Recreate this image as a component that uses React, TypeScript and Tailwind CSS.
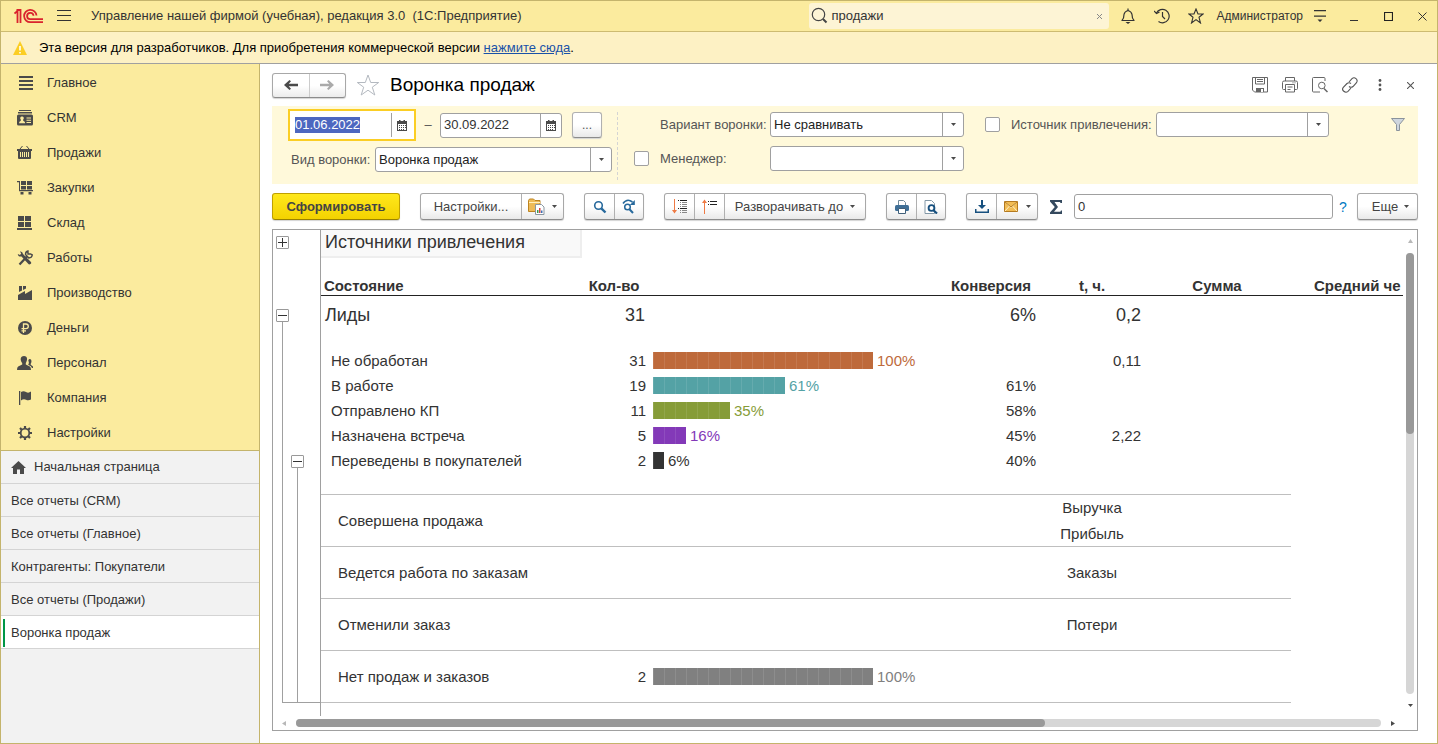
import React, { useEffect, useRef } from 'react';

type IconProps = { className?: string };

const Logo = () => (
  <svg width="30" height="16" viewBox="0 0 30 16" fill="none" stroke="#d9232e" strokeWidth="1.8">
    <path d="M0.5 5.5L3.5 3V15" />
    <path d="M2.5 2H6.5V15" />
    <path d="M22.5 7.5A6.2 6.2 0 1 0 16.5 14.2H29" />
    <path d="M19.5 7.8A3.2 3.2 0 1 0 16.5 11.2H29" />
  </svg>
);

const Caret: React.FC<IconProps> = ({ className }) => (
  <svg className={className} width="5" height="3" viewBox="0 0 5 3">
    <path d="M0 0H5L2.5 3Z" fill="#4a4a4a" />
  </svg>
);

const CalendarIcon = () => (
  <svg width="10" height="11" viewBox="0 0 10 11">
    <path d="M2 0h1.500v1h3V0H8v1h2v10H0V1h2z" fill="#4a4a4a" />
    <path d="M1 4h8v6H1z" fill="#fff" />
    <path d="M2 5h1v1H2zM4 5h1v1H4zM6 5h1v1H6zM8 5h1v1H8zM2 7h1v1H2zM4 7h1v1H4zM6 7h1v1H6zM8 7h1v1H8zM2 9h1v1H2zM4 9h1v1H4zM6 9h1v1H6z" fill="#4a4a4a" />
  </svg>
);

const menu = [
  {
    title: 'Главное',
    icon: <path d="M2 1h14v2H2zM2 5h14v2H2zM2 9h14v2H2zM2 13h14v2H2z" />,
  },
  {
    title: 'CRM',
    icon: (
      <>
        <path d="M2 0h12v1H2zM1 2h14v1.500H1zM1.500 4.500h13q1.500 0 1.500 1.500v8q0 1.500-1.500 1.500h-13Q0 15.500 0 14V6Q0 4.500 1.500 4.500z" />
        <path d="M5 6.500a1.700 1.700 0 0 1 1.200 3v1.200q2 .6 2 2.600H2q0-2 1.800-2.600V9.500A1.700 1.700 0 0 1 5 6.500zM9.500 7.500H14v1H9.500zM9.500 9.800H14v1H9.500zM9.500 12H14v1H9.500z" fill="#fbeb9e" />
      </>
    ),
  },
  {
    title: 'Продажи',
    icon: (
      <>
        <path d="M0 4h15v2H0zM1 6h13v7q0 1-1 1H2q-1 0-1-1z" />
        <path d="M3 4l2.500-3M12 4L9.500 1" stroke="#4a4a4a" fill="none" />
        <path d="M3 7h1v5H3zM5 7h1v5H5zM7 7h1v5H7zM9 7h1v5H9zM11 7h1v5h-1z" fill="#fbeb9e" />
      </>
    ),
  },
  {
    title: 'Закупки',
    icon: (
      <path d="M0 1h3v9h13v1.200H2V2.200H0zM4 1h5v4H4zM10 1h5v4h-5zM4 6h5v3.500H4zM10 6h5v3.500h-5zM3.500 12h3v2.500h-3zM11.500 12h3v2.500h-3z" />
    ),
  },
  {
    title: 'Склад',
    icon: <path d="M1 1h6v5H1zM8 1h6v5H8zM1 7h6v5H1zM8 7h6v5H8zM0 13h15v2H0z" />,
  },
  {
    title: 'Работы',
    icon: (
      <>
        <path d="M3 1.500Q5.500 1 6 4l7.500 7.500q1.500 1.500 0 2.500t-2.300-.3L4.500 6.500Q1 7 .8 4L3 5 4.200 3.500z" />
        <path d="M2.500 14.500L10 6.500" stroke="#4a4a4a" strokeWidth="2.200" fill="none" />
        <path d="M8.500 4.500Q8.500 1.500 11 1v3h2.500l1.800 1q-.5 3-3.500 3z" fill="none" stroke="#4a4a4a" strokeWidth="1.400" />
      </>
    ),
  },
  {
    title: 'Производство',
    icon: <path d="M1 15V10L8 6v3l7-4v10zM2 1h3v4.500L2 7zM6 1h3v2.500L6 5z" />,
  },
  {
    title: 'Деньги',
    icon: (
      <>
        <circle cx="8" cy="8" r="7" />
        <path d="M6.500 13V4H9a2.300 2.300 0 0 1 0 4.600H4.500M4.500 10.800H9" fill="none" stroke="#fbeb9e" strokeWidth="1.300" />
      </>
    ),
  },
  {
    title: 'Персонал',
    icon: (
      <path d="M7 1c4 0 3.500 4.500 1.800 7v1.500l4 2Q14 12 14 15H0q0-3 1.200-3.500l4-2V8C3 5.500 3 1 7 1zM12.500 4c2.500-.2 2.300 3.500 1.200 4.800v1L16 11.500V13h-1q-.5-1.600-3.800-3.200Q12.500 8 11.300 5z" />
    ),
  },
  {
    title: 'Компания',
    icon: <path d="M2 1h1.300v14H2zM4 2q2.500-1.500 5 0t5-.5v8q-2.500 1.500-5 .3T4 10.500z" />,
  },
  {
    title: 'Настройки',
    icon: (
      <>
        <circle cx="8" cy="8" r="4.300" fill="none" stroke="#4a4a4a" strokeWidth="1.800" />
        <path
          d="M8 1v2.500M8 12.500V15M1 8h2.500M12.500 8H15M3 3l1.700 1.700M11.300 11.300L13 13M13 3l-1.700 1.700M4.700 11.300L3 13"
          stroke="#4a4a4a"
          strokeWidth="2.200"
          fill="none"
        />
      </>
    ),
  },
];

const tabs = [
  'Все отчеты (CRM)',
  'Все отчеты (Главное)',
  'Контрагенты: Покупатели',
  'Все отчеты (Продажи)',
  'Воронка продаж',
];

const stages = [
  { name: 'Не обработан', count: 31, blocks: 20, percent: '100%', bar: 'bg-[#be6a3b]', text: 'text-[#be6a3b]', conversion: '', hours: '0,11' },
  { name: 'В работе', count: 19, blocks: 12, percent: '61%', bar: 'bg-[#54a2a5]', text: 'text-[#54a2a5]', conversion: '61%', hours: '' },
  { name: 'Отправлено КП', count: 11, blocks: 7, percent: '35%', bar: 'bg-[#869c38]', text: 'text-[#869c38]', conversion: '58%', hours: '' },
  { name: 'Назначена встреча', count: 5, blocks: 3, percent: '16%', bar: 'bg-[#8339b8]', text: 'text-[#8339b8]', conversion: '45%', hours: '2,22' },
  { name: 'Переведены в покупателей', count: 2, blocks: 1, percent: '6%', bar: 'bg-[#333333]', text: 'text-[#333333]', conversion: '40%', hours: '' },
];

const outcomes = [
  { name: 'Совершена продажа', labels: ['Выручка', 'Прибыль'], last: false },
  { name: 'Ведется работа по заказам', labels: ['Заказы'], last: false },
  { name: 'Отменили заказ', labels: ['Потери'], last: false },
  { name: 'Нет продаж и заказов', labels: [], last: true },
];

const Bar: React.FC<{ blocks: number; percent: string; bar: string; text: string }> = ({ blocks, percent, bar, text }) => (
  <div className={`flex items-center gap-1 pl-1.5 ${text}`}>
    <div className="flex">
      {Array.from({ length: blocks }, (_, i) => (
        <div key={i} className={`h-[17px] w-[11px] border-l border-white/10 ${bar}`} />
      ))}
    </div>
    {percent}
  </div>
);

const ToolButton: React.FC<{ label: string; className?: string; children: React.ReactNode }> = ({ label, className = 'w-[30px]', children }) => (
  <button aria-label={label} className={`flex items-center justify-center ${className}`}>
    {children}
  </button>
);

const ButtonGroup: React.FC<{ children: React.ReactNode }> = ({ children }) => (
  <div className="flex h-[27px] shrink-0 divide-x divide-[#b0b0b0] rounded-[3px] border border-[#a8a8a8] border-b-[#8c8c8c] bg-linear-to-b from-white from-50% to-[#e9e9e9] shadow-[0_1px_1px_#d4d4d4]">
    {children}
  </div>
);

const SelectBox: React.FC<{ id: string; value: string; className: string }> = ({ id, value, className }) => (
  <div className={`relative h-[25px] shrink-0 rounded-[3px] border border-[#a0a0a0] bg-white ${className}`}>
    <select id={id} className="h-full w-full appearance-none pr-6 pl-[3px] text-[#222222] outline-none">
      <option>{value}</option>
    </select>
    <span className="pointer-events-none absolute inset-y-0 right-0 flex w-[21px] items-center justify-center border-l border-[#a0a0a0]">
      <Caret />
    </span>
  </div>
);

const Toggle: React.FC<{ open?: boolean }> = ({ open }) => (
  <button
    aria-label={open ? 'Свернуть' : 'Развернуть'}
    className="flex size-[13px] shrink-0 items-center justify-center rounded-[1px] border border-[#999999] bg-white"
  >
    <svg width="9" height="9" viewBox="0 0 9 9" stroke="#333" fill="none">
      <path d={open ? 'M0 4.500H9' : 'M0 4.500H9M4.500 0V9'} />
    </svg>
  </button>
);

const TitleBar = () => (
  <header className="flex h-[31px] items-center border-b border-[#cdbb71] bg-[#fbeb9e] pr-[5px] pl-[13px]">
    <Logo />
    <button aria-label="Меню" className="ml-[13px]">
      <svg width="14" height="12" viewBox="0 0 14 12" stroke="#333" fill="none">
        <path d="M0 .5H14M0 5.500H14M0 10.500H14" strokeWidth="1.200" />
      </svg>
    </button>
    <h1 className="ml-5 whitespace-pre text-[#333333]">Управление нашей фирмой (учебная), редакция 3.0  (1С:Предприятие)</h1>
    <div className="ml-auto flex h-[26px] w-[300px] items-center rounded-[3px] bg-[#fdf4d5] px-0.5">
      <svg width="18" height="18" viewBox="0 0 18 18" fill="none" stroke="#444">
        <circle cx="7.500" cy="7.500" r="6.200" strokeWidth="1.200" />
        <path d="M12 12l3.500 3.500" strokeWidth="2" />
      </svg>
      <input aria-label="Поиск" defaultValue="продажи" className="min-w-0 flex-1 pl-0.5 text-[#333333] outline-none" />
      <button aria-label="Очистить" className="flex size-4 items-center justify-center">
        <svg width="5" height="5" viewBox="0 0 5 5" stroke="#888">
          <path d="M0 0L5 5M5 0L0 5" />
        </svg>
      </button>
    </div>
    <div className="ml-[9px] flex items-center gap-3.5">
      <button aria-label="Уведомления" className="flex w-5 justify-center">
        <svg width="16" height="16" viewBox="0 0 16 16" fill="none" stroke="#333" strokeWidth="1.200">
          <path d="M2 12.500C4 10.500 4 9 4 6.500Q4.500 3.500 8 2.500 11.500 3.500 12 6.500C12 9 12 10.500 14 12.500Z" strokeLinejoin="round" />
          <path d="M8 0.500V2.500" />
          <path d="M5.500 14h5L8 16z" fill="#333" stroke="none" />
        </svg>
      </button>
      <button aria-label="История" className="flex w-5 justify-center">
        <svg width="16" height="16" viewBox="0 0 16 16" fill="none" stroke="#333" strokeWidth="1.200">
          <path d="M2.500 5A6.700 6.700 0 1 1 4.500 13.500" />
          <path d="M0 3l2.500 2.500L5.500 4M8.500 4v4.500L11 11" />
        </svg>
      </button>
      <button aria-label="Избранное" className="flex w-5 justify-center">
        <svg width="16" height="16" viewBox="0 0 16 16" fill="none" stroke="#333" strokeWidth="1.100">
          <path d="M8 1l2 5h5l-4 3.300L12.500 15 8 11.600 3.500 15 5 9.300 1 6h5z" />
        </svg>
      </button>
    </div>
    <span className="ml-2.5 text-xs text-[#333333]">Администратор</span>
    <div className="ml-[7px] flex items-center gap-3.5">
      <button aria-label="Сервис" className="flex w-5 justify-center">
        <svg width="14" height="12" viewBox="0 0 14 12">
          <path d="M1 0h12v1.300H1zM1 5.500h12v1.300H1zM4.500 9.500h5L7 12z" fill="#333" />
        </svg>
      </button>
      <button aria-label="Свернуть окно" className="flex w-5 justify-center">
        <svg width="8" height="9" viewBox="0 0 8 9">
          <path d="M0 8h8v1H0z" fill="#333" />
        </svg>
      </button>
      <button aria-label="Развернуть окно" className="flex w-5 justify-center">
        <svg width="9" height="9" viewBox="0 0 9 9">
          <path d="M.5.500h8v8h-8z" fill="none" stroke="#222" strokeWidth="1.200" />
        </svg>
      </button>
      <button aria-label="Закрыть окно" className="flex w-5 justify-center">
        <svg width="9" height="9" viewBox="0 0 9 9">
          <path d="M.5.500l8 8M8.500.500l-8 8" stroke="#333" />
        </svg>
      </button>
    </div>
  </header>
);

const Sidebar = () => (
  <aside className="flex w-[259px] shrink-0 flex-col border-r border-[#c4b46c] bg-[#f2f2f2] text-[#333333]">
    <nav className="border-b border-[#c4b46c] bg-[#fbeb9e] pt-px">
      {menu.map((item) => (
        <a key={item.title} href="#" className="flex h-[35px] items-center gap-3.5 pl-4">
          <svg width="16" height="16" viewBox="0 0 16 16" fill="#4a4a4a">
            {item.icon}
          </svg>
          {item.title}
        </a>
      ))}
    </nav>
    <a href="#" className="flex h-[33px] items-center gap-2 border-b border-[#d4d4d4] pl-2.5">
      <svg width="15" height="13" viewBox="0 0 15 13" fill="#4a4a4a">
        <path d="M7.500 0L15 7h-2v6H9V8.500H6V13H2V7H0z" />
      </svg>
      Начальная страница
    </a>
    {tabs.map((tab) => (
      <a
        key={tab}
        href="#"
        className={`flex h-[33px] items-center border-b border-[#d4d4d4] pt-px pl-0.5 ${tab === 'Воронка продаж' ? 'bg-white' : ''}`}
      >
        <span className={`mr-1.5 h-7 w-0.5 ${tab === 'Воронка продаж' ? 'bg-[#009646]' : ''}`} />
        {tab}
      </a>
    ))}
  </aside>
);

const FormHeader = () => (
  <div className="flex h-[26px] items-center">
    <div className="flex h-[25px] w-[74px] divide-x divide-[#cccccc] rounded-[3px] border border-[#a8a8a8] border-b-[#8c8c8c] bg-linear-to-b from-white from-50% to-[#ececec] shadow-[0_1px_1px_#d4d4d4]">
      <button aria-label="Назад" className="flex flex-1 items-center justify-center">
        <svg width="14" height="10" viewBox="0 0 14 10" fill="#4a4a4a">
          <path d="M0 5L5.500 0L7 1.200L4.700 3.700H14V6.300H4.700L7 8.800L5.500 10Z" />
        </svg>
      </button>
      <button aria-label="Вперед" className="flex flex-1 items-center justify-center">
        <svg width="14" height="10" viewBox="0 0 14 10" fill="#aaaaaa">
          <path d="M14 5L8.500 0L7 1.200L9.300 3.700H0V6.300H9.300L7 8.800L8.500 10Z" />
        </svg>
      </button>
    </div>
    <button aria-label="В избранное" className="ml-2.5">
      <svg width="24" height="22" viewBox="0 0 24 22" fill="none" stroke="#b4b9c0">
        <path d="M12 1l2.700 7.500h8L16.300 13.200 18.800 21 12 16.200 5.200 21 7.700 13.200 1.300 8.500h8z" />
      </svg>
    </button>
    <h2 className="ml-2.5 text-[19px] text-black">Воронка продаж</h2>
    <div className="-mr-0.5 ml-auto flex items-center gap-2.5">
      <button aria-label="Сохранить" className="flex w-5 justify-center">
        <svg width="16" height="16" viewBox="0 0 16 16" fill="none" stroke="#666">
          <path d="M.5.500h15v14.500H2.500L.5 13zM3.500.500v6.500h9V.500M5 2.500h6M5 4.500h6" />
          <path d="M4 11h8v4H4z" fill="#666" stroke="none" />
          <path d="M9 12h2v3H9z" fill="#fff" stroke="none" />
        </svg>
      </button>
      <button aria-label="Печать" className="flex w-5 justify-center">
        <svg width="16" height="16" viewBox="0 0 16 16" fill="none" stroke="#666">
          <path d="M3.500 4V.500h9V4M3.500 12.500h-2q-1 0-1-1v-6q0-1.500 1.500-1.500h12q1.500 0 1.500 1.500v6q0 1-1 1h-2" />
          <path d="M3.500 7.500h9v7.500h-9zM5.500 10h5M5.500 12.500h3M10.500 5.800h1M12.500 5.800h1" />
        </svg>
      </button>
      <button aria-label="Просмотр" className="flex w-5 justify-center">
        <svg width="16" height="16" viewBox="0 0 16 16" fill="none" stroke="#666">
          <path d="M8 15H1.500q-1 0-1-1V1.500q0-1 1-1h10.500q1 0 1 1V4" />
          <circle cx="9.800" cy="8.500" r="3.300" />
          <path d="M12 11.500L15.500 15" strokeWidth="1.500" />
        </svg>
      </button>
      <button aria-label="Ссылка" className="flex w-5 justify-center">
        <svg width="16" height="16" viewBox="0 0 16 16" fill="none" stroke="#555" strokeWidth="1.100">
          <path d="M7 5l3-3.300q2-1.800 4 0t.5 4L11 9.500Q9 11 7 9.500" />
          <path d="M9 11l-3 3.300q-2 1.800-4.200 0t-.5-4L5 6.500Q7 5 9 6.500" />
        </svg>
      </button>
      <button aria-label="Ещё действия" className="flex w-5 justify-center">
        <svg width="4" height="12" viewBox="0 0 4 12" fill="#555">
          <circle cx="2" cy="1.500" r="1.400" />
          <circle cx="2" cy="6" r="1.400" />
          <circle cx="2" cy="10.500" r="1.400" />
        </svg>
      </button>
      <button aria-label="Закрыть" className="flex w-5 justify-center">
        <svg width="7" height="7" viewBox="0 0 7 7">
          <path d="M0 0l7 7M7 0L0 7" stroke="#555" strokeWidth="1.100" />
        </svg>
      </button>
    </div>
  </div>
);

const Filters = () => {
  const startRef = useRef<HTMLInputElement>(null);

  useEffect(() => {
    startRef.current?.focus();
    startRef.current?.select();
  }, []);

  return (
    <section className="mt-2 flex h-[78px] items-start bg-[#fff9da] pt-[3px] text-[#555555]">
      <div className="flex w-[345px] shrink-0 flex-col gap-1.5 pr-[5px] pl-4">
        <div className="flex items-center">
          <div className="flex h-8 w-32 border-2 border-[#fbce24] bg-white p-0.5">
            <input
              ref={startRef}
              aria-label="Начало периода"
              defaultValue="01.06.2022"
              className="min-w-0 flex-1 pl-[3px] text-black outline-none selection:bg-[#4d67c0] selection:text-white"
            />
            <button aria-label="Выбрать дату начала" className="flex w-[21px] items-center justify-center border-l border-[#a0a0a0]">
              <CalendarIcon />
            </button>
          </div>
          <span className="w-6 text-center">–</span>
          <div className="flex h-[25px] w-[122px] rounded-[3px] border border-[#a0a0a0] bg-white">
            <input aria-label="Конец периода" defaultValue="30.09.2022" className="min-w-0 flex-1 pl-[3px] text-[#333333] outline-none" />
            <button aria-label="Выбрать дату конца" className="flex w-[21px] items-center justify-center border-l border-[#a0a0a0]">
              <CalendarIcon />
            </button>
          </div>
          <button className="ml-2.5 h-[26px] w-[30px] rounded-[3px] border border-[#b0b0b0] border-b-[#8c8c8c] bg-linear-to-b from-white from-50% to-[#e9e9e9] text-xs shadow-[0_1px_1px_#d4d4d4]">
            ...
          </button>
        </div>
        <div className="flex items-center justify-between">
          <label htmlFor="kind" className="pl-[3px] whitespace-nowrap">Вид воронки:</label>
          <SelectBox id="kind" value="Воронка продаж" className="w-[237px]" />
        </div>
      </div>
      <div className="mt-[3px] h-[68px] border-l border-dashed border-[#d4d4d4]" />
      <div className="mt-[3px] ml-4 grid grid-cols-[26px_110px_194px] items-center gap-y-[9px]">
        <label htmlFor="variant" className="col-start-2 whitespace-nowrap">Вариант воронки:</label>
        <SelectBox id="variant" value="Не сравнивать" className="w-[194px]" />
        <input id="use-manager" aria-label="Отбор по менеджеру" type="checkbox" className="size-[15px] appearance-none rounded-[2px] border border-[#a0a0a0] bg-white" />
        <label htmlFor="manager">Менеджер:</label>
        <SelectBox id="manager" value="" className="w-[194px]" />
      </div>
      <div className="mt-[3px] ml-[21px] flex items-center">
        <input id="use-source" aria-label="Отбор по источнику" type="checkbox" className="size-[15px] appearance-none rounded-[2px] border border-[#a0a0a0] bg-white" />
        <label htmlFor="source" className="w-[156px] pl-[11px] whitespace-nowrap">Источник привлечения:</label>
        <SelectBox id="source" value="" className="w-[173px]" />
      </div>
      <button aria-label="Отбор" className="mt-[9px] mr-[13px] ml-auto">
        <svg width="14" height="13" viewBox="0 0 14 13">
          <path d="M.5.500h13L8.500 6.500v6h-3v-6z" fill="#cfd6de" stroke="#8a939c" />
        </svg>
      </button>
    </section>
  );
};

const Toolbar = () => (
  <div className="mt-[9px] flex h-[27px] items-center text-[#444444]">
    <button className="h-[27px] w-32 rounded-[3px] border border-[#bfa000] border-b-[#9a8200] bg-linear-to-b from-[#ffe81a] to-[#f3d200] font-bold shadow-[0_1px_1px_#d4d4d4]">
      Сформировать
    </button>
    <div className="ml-5 flex min-w-0 flex-1 items-center gap-5">
      <ButtonGroup>
        <button className="w-[101px]">Настройки...</button>
        <ToolButton label="Варианты отчета" className="w-[41px] gap-[7px]">
          <svg width="17" height="17" viewBox="0 0 17 17">
            <path d="M.5 2.500L1.500 1h4L7 2.500h5v11H.5z" fill="#eebb58" stroke="#bd8420" />
            <path d="M1 4.500h11" stroke="#fff0c0" />
            <path d="M7.500 6.500h6l2.500 2.500v7.500H7.500z" fill="#fff" stroke="#8a96a0" />
            <path d="M9 12h1.500v3H9z" fill="#3a9c50" />
            <path d="M11 10h1.500v5H11z" fill="#d34343" />
            <path d="M13 12.500h1.500V15H13z" fill="#3a70b5" />
          </svg>
          <Caret />
        </ToolButton>
      </ButtonGroup>
      <ButtonGroup>
        <ToolButton label="Найти">
          <svg width="14" height="14" viewBox="0 0 14 14" fill="none" stroke="#27699c">
            <circle cx="5.500" cy="5.500" r="3.800" strokeWidth="1.600" />
            <path d="M8.300 8.300L12.500 12.500" strokeWidth="2.400" />
          </svg>
        </ToolButton>
        <ToolButton label="Найти далее" className="w-7">
          <svg width="15" height="15" viewBox="0 0 15 15" fill="none" stroke="#27699c">
            <path d="M1 4.500Q5-1 10.500 3" strokeWidth="1.600" />
            <path d="M12.800 1v5H7.800z" fill="#27699c" stroke="none" />
            <circle cx="5.500" cy="8" r="2.800" strokeWidth="1.500" />
            <path d="M7.500 10.200L11 14" strokeWidth="2" />
          </svg>
        </ToolButton>
      </ButtonGroup>
      <ButtonGroup>
        <ToolButton label="Развернуть группы">
          <svg width="16" height="15" viewBox="0 0 16 15" fill="none">
            <path d="M2.500 0V14" stroke="#ee7a44" />
            <path d="M0 11h5L2.500 14.500z" fill="#ee7a44" />
            <path d="M6 1.500h1M8 1.500h7M6 9.500h1M8 9.500h7" stroke="#222" />
            <path d="M8 3.500h1M10 3.500h5M8 5.500h1M10 5.500h5M8 7.500h1M10 7.500h5M8 11.500h1M10 11.500h5M8 13.500h1M10 13.500h5" stroke="#888" />
          </svg>
        </ToolButton>
        <ToolButton label="Свернуть группы">
          <svg width="16" height="15" viewBox="0 0 16 15" fill="none">
            <path d="M2.500 15V1" stroke="#ee7a44" />
            <path d="M0 4h5L2.500 .5z" fill="#ee7a44" />
            <path d="M6 2.500h1M8 2.500h7M6 5.500h1M8 5.500h7" stroke="#222" strokeWidth="1.200" />
          </svg>
        </ToolButton>
        <button className="flex w-[140px] items-center justify-center gap-[7px]">
          Разворачивать до
          <Caret />
        </button>
      </ButtonGroup>
      <ButtonGroup>
        <ToolButton label="Печать">
          <svg width="14" height="14" viewBox="0 0 14 14">
            <path d="M3.500.500h5l2 2V6h-7z" fill="#fff" stroke="#6f8899" />
            <path d="M1.500 5h11Q14 5 14 6.500v3q0 1.500-1.500 1.500h-11Q0 11 0 9.500v-3Q0 5 1.500 5z" fill="#3f6f97" />
            <path d="M3.500 8.500h7v5h-7z" fill="#fff" stroke="#3f5f7a" />
          </svg>
        </ToolButton>
        <ToolButton label="Предварительный просмотр" className="w-7">
          <svg width="14" height="14" viewBox="0 0 14 14" fill="none">
            <path d="M1 .5h6.500l3 3V13.500H1z" fill="#fff" stroke="#8297a6" />
            <circle cx="7.500" cy="8" r="2.900" stroke="#17507f" strokeWidth="1.900" fill="#fff" />
            <path d="M9.500 10.300L13 13.500" stroke="#17507f" strokeWidth="2.200" />
          </svg>
        </ToolButton>
      </ButtonGroup>
      <ButtonGroup>
        <ToolButton label="Сохранить">
          <svg width="14" height="13" viewBox="0 0 14 13">
            <path d="M6 0h2v5h3L7 9 3 5h3zM0 9h1.500v2.500h11V9H14v4H0z" fill="#17507f" />
          </svg>
        </ToolButton>
        <ToolButton label="Отправить по почте" className="w-10 gap-2">
          <svg width="14" height="11" viewBox="0 0 14 11">
            <path d="M.5.500h13v10H.5z" fill="#f2bd55" stroke="#b47a20" />
            <path d="M1 1l6 5.500L13 1M1 10l4.500-5M13 10L8.500 5" fill="none" stroke="#fff0c4" />
            <path d="M1 1l6 5L13 1" fill="none" stroke="#b47a20" />
          </svg>
          <Caret />
        </ToolButton>
      </ButtonGroup>
      <label htmlFor="sum" aria-label="Сумма" className="-mx-2">
        <svg width="12" height="14" viewBox="0 0 12 14">
          <path d="M0 0h12v3h-1.500L10 2H4.500L8 7l-4 4.800h6.300l.7-1.300H12V14H0v-1.500L4.800 7 0 1.500z" fill="#34495e" />
        </svg>
      </label>
      <input id="sum" defaultValue="0" className="h-[25px] min-w-0 flex-1 rounded-[3px] border border-[#a0a0a0] bg-white pl-[3px] text-[#333333] outline-none" />
    </div>
    <a href="#" className="w-6 pr-1 text-right text-sm text-[#0079c1]">
      <span className="block w-full text-center">?</span>
    </a>
    <ButtonGroup>
      <button className="flex w-[59px] items-center justify-center gap-1.5 pl-1.5">
        Еще
        <Caret />
      </button>
    </ButtonGroup>
  </div>
);

const ReportTable = () => (
  <table className="w-full table-fixed border-collapse text-[15px] leading-[17px] text-[#333333]">
    <colgroup>
      <col className="w-[260px]" />
      <col className="w-[66px]" />
      <col className="w-[294px]" />
      <col className="w-[100px]" />
      <col className="w-[102px]" />
      <col className="w-[148px]" />
      <col />
    </colgroup>
    <thead>
      <tr className="h-[27px]">
        <td className="border-r-2 border-b-2 border-[#eeeeee] bg-[#f9f9f9] pb-0.5 pl-1 text-[18px]">Источники привлечения</td>
      </tr>
      <tr className="h-[38px] border-b border-[#222222] align-bottom">
        <th className="pb-px pl-[3px] text-left">Состояние</th>
        <th className="pb-px">Кол-во</th>
        <th />
        <th className="pb-px">Конверсия</th>
        <th className="pb-px">t, ч.</th>
        <th className="pb-px">Сумма</th>
        <th className="pb-px pl-[23px] text-left whitespace-nowrap">Средний че</th>
      </tr>
    </thead>
    <tbody>
      <tr className="h-[53px] align-top text-[18px] leading-5">
        <td className="pt-[9px] pl-1">Лиды</td>
        <td className="pt-[9px] pr-0.5 text-right">31</td>
        <td />
        <td className="pt-[9px] pr-[5px] text-right">6%</td>
        <td className="pt-[9px] pr-0.5 text-right">0,2</td>
      </tr>
      {stages.map((stage) => (
        <tr key={stage.name} className="h-[25px]">
          <td className="pl-2.5">{stage.name}</td>
          <td className="pr-px text-right">{stage.count}</td>
          <td>
            <Bar blocks={stage.blocks} percent={stage.percent} bar={stage.bar} text={stage.text} />
          </td>
          <td className="pr-[5px] text-right">{stage.conversion}</td>
          <td className="pr-0.5 text-right">{stage.hours}</td>
        </tr>
      ))}
      <tr className="h-[21px]">
        <td colSpan={6} className="border-b border-[#bfbfbf]" />
      </tr>
      {outcomes.map((row) => (
        <tr key={row.name} className="h-[52px]">
          <td className="border-b border-[#bfbfbf] pl-[17px]">{row.name}</td>
          <td className="border-b border-[#bfbfbf] pr-px text-right">{row.last ? 2 : ''}</td>
          <td className="border-b border-[#bfbfbf]">
            {row.last && <Bar blocks={20} percent="100%" bar="bg-[#808080]" text="text-[#808080]" />}
          </td>
          <td className="border-b border-[#bfbfbf]" />
          <td className="border-b border-[#bfbfbf] text-center">
            <div className="flex flex-col gap-[9px]">
              {row.labels.map((label) => (
                <span key={label}>{label}</span>
              ))}
            </div>
          </td>
          <td className="border-b border-[#bfbfbf]" />
        </tr>
      ))}
    </tbody>
  </table>
);

const Report = () => (
  <section className="mt-[9px] flex flex-1 flex-col border border-[#a0a0a0] bg-white">
    <div className="flex flex-1">
      <div className="flex w-12 shrink-0 flex-col border-r border-[#a0a0a0] pt-1.5 pl-[3px]">
        <Toggle />
        <div className="h-[60px]" />
        <Toggle open />
        <div className="ml-1.5 flex h-[381px] flex-col border-b border-l border-[#a0a0a0] pt-[133px] pl-2">
          <Toggle open />
          <div className="ml-1.5 w-px flex-1 bg-[#a0a0a0]" />
        </div>
      </div>
      <div className="min-w-0 flex-1 overflow-hidden">
        <ReportTable />
      </div>
      <div className="flex w-3.5 shrink-0 flex-col items-center pt-[9px] pb-[9px]">
        <svg width="5" height="4" viewBox="0 0 5 4">
          <path d="M0 4H5L2.500 0Z" fill="#b8b8b8" />
        </svg>
        <div className="my-2.5 w-2 flex-1 rounded-full bg-[#d6d6d6]">
          <div className="h-[41%] rounded-full bg-[#999999]" />
        </div>
        <Caret />
      </div>
    </div>
    <div className="flex h-3.5 items-center pr-[22px] pl-[9px]">
      <svg width="4" height="5" viewBox="0 0 4 5">
        <path d="M4 0V5L0 2.500Z" fill="#b8b8b8" />
      </svg>
      <div className="mx-2.5 h-2 flex-1 rounded-full bg-[#d6d6d6]">
        <div className="h-2 w-[69%] rounded-full bg-[#999999]" />
      </div>
      <svg width="4" height="5" viewBox="0 0 4 5">
        <path d="M0 0V5L4 2.500Z" fill="#4a4a4a" />
      </svg>
    </div>
  </section>
);

export default function App() {
  return (
    <div className="flex min-h-screen flex-col border border-[#c4b46c] bg-white font-['Liberation_Sans',Arial,sans-serif] text-[13px] leading-4">
      <TitleBar />
      <div className="flex h-8 items-center border-b border-[#a0a0a0] bg-[#fdf1c4] pl-3 text-black">
        <svg width="14" height="14" viewBox="0 0 14 14">
          <path d="M7 0L14 14H0Z" fill="#fbce24" />
          <path d="M6.200 5h1.600v4.500H6.200zM6.200 11h1.600v1.500H6.200z" fill="#fff" />
        </svg>
        <p className="ml-3">
          Эта версия для разработчиков. Для приобретения коммерческой версии{' '}
          <a href="#" className="text-[#1a52a8] underline">нажмите сюда</a>.
        </p>
      </div>
      <div className="flex flex-1">
        <Sidebar />
        <main className="flex min-w-0 flex-1 flex-col pt-2 pr-[19px] pb-3 pl-3">
          <FormHeader />
          <Filters />
          <Toolbar />
          <Report />
        </main>
      </div>
    </div>
  );
}
